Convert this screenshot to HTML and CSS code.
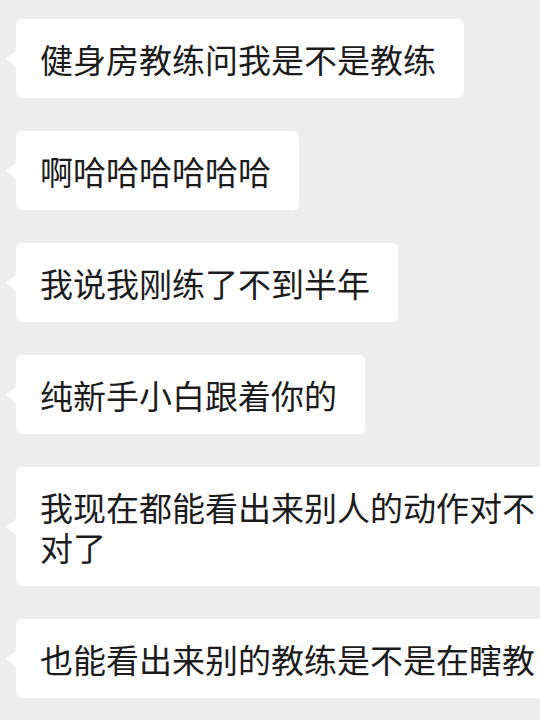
FILE: index.html
```html
<!DOCTYPE html>
<html lang="zh">
<head>
<meta charset="utf-8">
<link rel="stylesheet" href="styles.css">
</head>
<body>
<div class="chat">
  <div class="bubble">健身房教练问我是不是教练</div>
  <div class="bubble">啊哈哈哈哈哈哈</div>
  <div class="bubble">我说我刚练了不到半年</div>
  <div class="bubble">纯新手小白跟着你的</div>
  <div class="bubble">我现在都能看出来别人的动作对不对了</div>
  <div class="bubble">也能看出来别的教练是不是在瞎教</div>
</div>
</body>
</html>
```
FILE: styles.css
```css
html, body {
  margin: 0;
  padding: 0;
  background: #ededed;
  overflow: hidden;
  width: 540px;
  height: 720px;
}
.chat {
  display: flex;
  flex-direction: column;
  align-items: flex-start;
  gap: 33px;
  padding: 19px 0 0 16px;
  width: 700px;
}
.bubble {
  position: relative;
  background: #ffffff;
  border-radius: 6px;
  padding: 20px 28px 19px 24px;
  font-family: "Noto Sans CJK SC", "Noto Sans", sans-serif;
  font-size: 33px;
  line-height: 40px;
  color: #1c1c1c;
  max-width: 500px;
}
.bubble::before {
  content: "";
  position: absolute;
  left: -10px;
  top: 50%;
  margin-top: -8px;
  border-style: solid;
  border-width: 8px 10px 8px 0;
  border-color: transparent #ffffff transparent transparent;
}
```
